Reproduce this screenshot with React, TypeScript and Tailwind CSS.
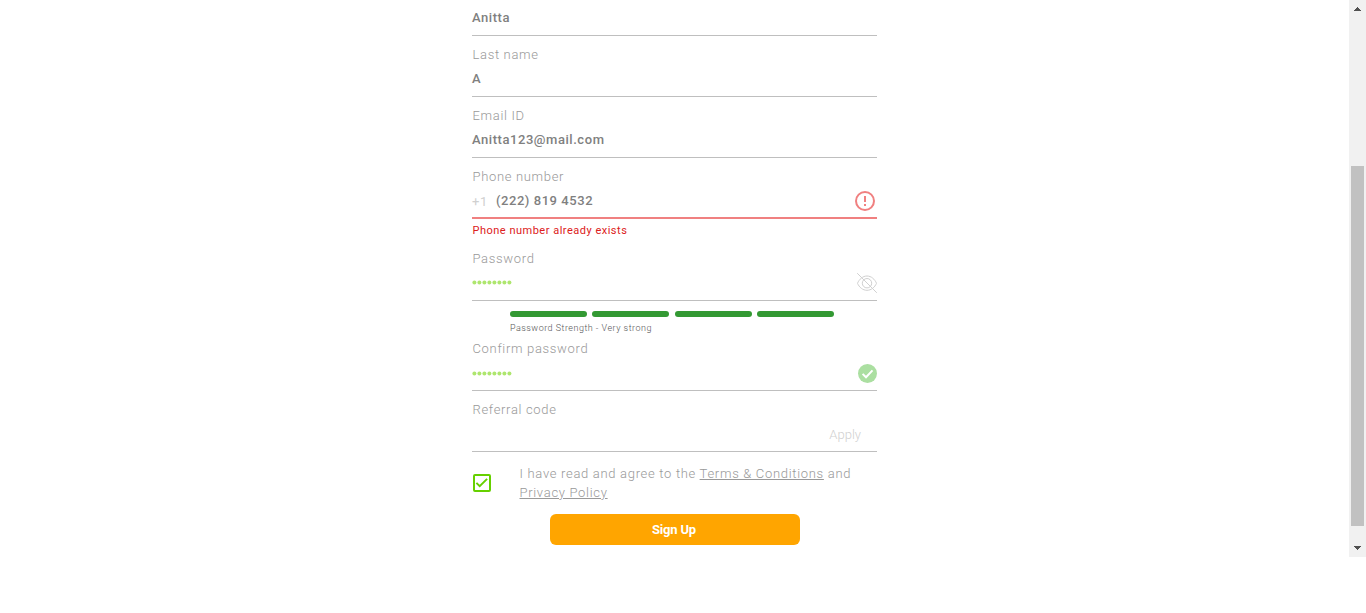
import type { ReactNode } from 'react';

type FieldProps = {
  label?: string;
  invalid?: boolean;
  icon?: ReactNode;
  children?: ReactNode;
};

function Field({ label, invalid, icon, children }: FieldProps) {
  return (
    <div
      className={`flex flex-col ${label ? 'h-[61px] pt-[9px]' : 'h-9 pt-2'} ${
        invalid ? 'border-b-2 border-[#f08080]' : 'border-b border-[#bfbfbf]'
      }`}
    >
      {label && (
        <label className="mb-1 h-5 pl-[0.5px] text-[13px] font-light leading-5 tracking-[0.67px] text-[#999999]">
          {label}
        </label>
      )}
      <div className="flex h-5 items-center text-[13px] font-medium leading-5 tracking-[0.55px] text-[#808080]">
        <div className="flex grow items-center">{children}</div>
        {icon}
      </div>
    </div>
  );
}

function Dots({ className }: { className?: string }) {
  return (
    <svg className={`h-[5px] w-10 ${className ?? ''}`} viewBox="0 0 40 5" fill="#aee66e">
      {[2.4, 7.4, 12.4, 17.4, 22.4, 27.4, 32.4, 37.4].map((x) => (
        <circle key={x} cx={x} cy="2.5" r="2" />
      ))}
    </svg>
  );
}

function AlertIcon() {
  return (
    <svg className="mr-0.5 size-5 shrink-0" viewBox="0 0 20 20" fill="none" stroke="#f08080" strokeWidth="2">
      <circle cx="10" cy="10" r="9" />
      <path d="M10 5v6M10 13v2" />
    </svg>
  );
}

function HiddenIcon() {
  return (
    <svg className="size-5 shrink-0" viewBox="0 0 20 20" fill="none" stroke="#d0d0d0" strokeWidth="1">
      <path d="M.5 10.300C2.200 6.200 5.800 3 10 3s7.800 3.200 9.500 7.300C17.800 14.300 14.200 17.300 10 17.300S2.200 14.300.5 10.300Z" />
      <circle cx="10" cy="10.200" r="4.700" />
      <path d="M.2.2 19.800 19.800" />
    </svg>
  );
}

function ConfirmedIcon() {
  return (
    <svg className="size-[19px] shrink-0" viewBox="0 0 19 19" fill="none">
      <circle cx="9.500" cy="9.500" r="9.500" fill="#abdfa1" />
      <path d="m4.600 9.900 3.400 3.400 6.500-6.900" stroke="#fff" strokeWidth="2" />
    </svg>
  );
}

function Scrollbar() {
  return (
    <div className="flex h-[557px] w-[17px] shrink-0 flex-col items-center bg-[#f1f1f1]">
      <svg className="mt-[7px] h-1 w-[7px]" viewBox="0 0 7 4" fill="#505050" shapeRendering="crispEdges">
        <path d="M3 0h1v1h1v1h1v1h1v1H0V3h1V2h1V1h1z" />
      </svg>
      <div className="mt-[155px] h-[360px] w-[13px] bg-[#c1c1c1]" />
      <svg className="mt-5 h-1 w-[7px]" viewBox="0 0 7 4" fill="#505050" shapeRendering="crispEdges">
        <path d="M0 0h7v1H6v1H5v1H4v1H3V3H2V2H1V1H0z" />
      </svg>
    </div>
  );
}

export default function App() {
  return (
    <div className="flex h-[613px] w-[1366px] overflow-hidden bg-white font-['Roboto',sans-serif]">
      <main className="grow pl-[472px]">
        <form className="flex w-[405px] flex-col">
          <Field>Anitta</Field>
          <Field label="Last name">A</Field>
          <Field label="Email ID">Anitta123@mail.com</Field>
          <Field label="Phone number" invalid icon={<AlertIcon />}>
            <span className="w-6 pt-0.5 font-normal text-[#d0d0d0]">+1</span>
            <span>(222) 819 4532</span>
          </Field>
          <p className="h-[21px] pl-[0.5px] pt-px text-[11px] leading-[22px] tracking-[0.5px] text-[#dc2020]">
            Phone number already exists
          </p>
          <Field label="Password" icon={<HiddenIcon />}>
            <Dots className="-mt-0.5" />
          </Field>
          <div className="h-[29px] pl-[38px] pt-2.5">
            <div className="flex w-[324px] justify-between">
              {[1, 2, 3, 4].map((level) => (
                <span key={level} className="h-1.5 w-[77px] rounded-full bg-[#339933]" />
              ))}
            </div>
            <p className="mt-[5px] text-[9px] font-light leading-3 tracking-[0.48px] text-[#555555]">
              Password Strength - Very strong
            </p>
          </div>
          <Field label="Confirm password" icon={<ConfirmedIcon />}>
            <Dots />
          </Field>
          <Field
            label="Referral code"
            icon={<span className="mr-4 pt-0.5 text-[13px] font-light tracking-normal text-[#d0d0d0]">Apply</span>}
          />
          <div className="flex pt-3">
            <svg className="ml-px mt-2.5 size-[18px] shrink-0" viewBox="0 0 18 18" fill="none" stroke="#66d000" strokeWidth="2">
              <rect x="1" y="1" width="16" height="16" rx="1" />
              <path d="m3.400 8.900 3.300 3.200 7.400-7.200" />
            </svg>
            <p className="ml-7 pl-[0.5px] text-[13px] font-light leading-[19px] tracking-[0.69px] text-[#999999]">
              I have read and agree to the <a className="underline">Terms &amp; Conditions</a> and
              <br />
              <a className="underline">Privacy Policy</a>
            </p>
          </div>
          <button
            type="button"
            className="ml-[78px] mt-3 h-[31px] w-[250px] rounded-md bg-[#ffa500] pr-0.5 text-[13px] font-bold tracking-[-0.2px] text-white"
          >
            Sign Up
          </button>
        </form>
      </main>
      <Scrollbar />
    </div>
  );
}
